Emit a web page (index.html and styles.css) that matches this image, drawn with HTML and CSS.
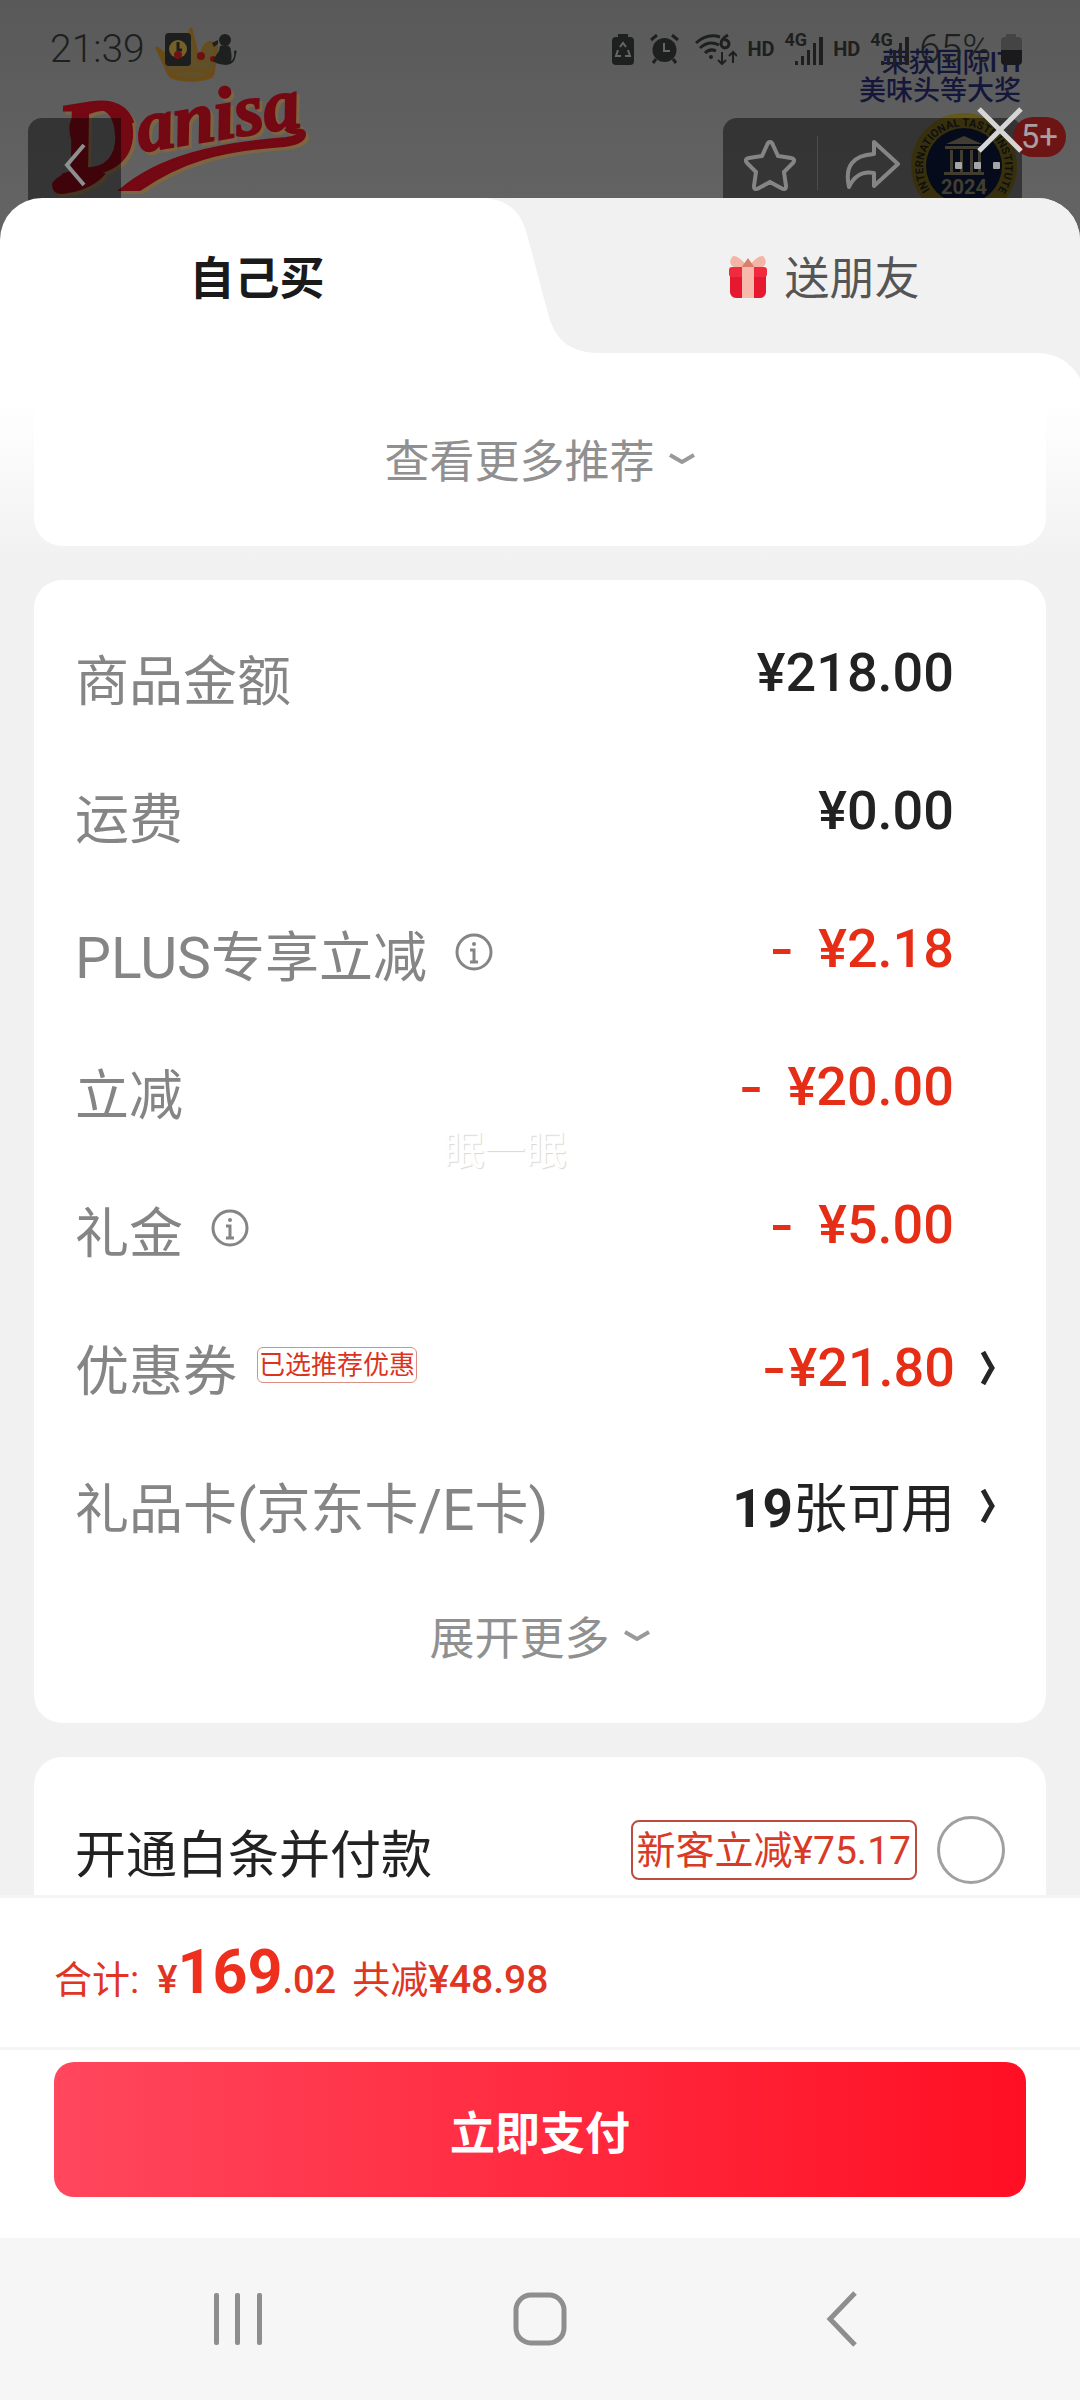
FILE: index.html
```html
<!DOCTYPE html>
<html lang="zh-CN">
<head>
<meta charset="utf-8">
<meta name="viewport" content="width=device-width, initial-scale=1">
<title>立即支付</title>
<link rel="stylesheet" href="styles.css">
</head>
<body>
<header class="backdrop">
  <svg class="art art-left" width="340" height="240" viewBox="0 0 340 240" aria-hidden="true">
    <g fill="none" stroke="#6b4c16" stroke-width="3" stroke-linejoin="round">
      <path d="M157 48l12 26q22 12 44 0l4-27q-8-10-14 2l-4 12-8-32-10 32-8-14-4 10z" fill="#5f5029"/>
      <ellipse cx="191" cy="75" rx="21" ry="5"/>
    </g>
    <circle cx="201" cy="56" r="4" fill="#6e1010"/><circle cx="213" cy="59" r="3" fill="#6e1010"/>
    <g class="brand">
      <g transform="rotate(-9 140 150)">
        <text class="brand-initial" x="60" y="166">D</text>
        <text class="brand-rest" x="140" y="152">anisa</text>
      </g>
      <path d="M120 190C160 156 215 144 286 138Q300 136 298 133Q290 134 286 130Q306 127 305 135Q304 144 284 146C220 150 180 162 140 190z"/>
      <path d="M90 170Q60 172 53 184Q53 196 68 192Q92 188 104 174z"/>
      <path d="M76 140Q66 110 104 106Q124 106 130 124" fill="none" stroke-width="9"/>
    </g>
  </svg>
  <svg class="art art-right" width="240" height="240" viewBox="840 0 240 240" aria-hidden="true">
    <text class="award" x="1021" y="72">荣获国际ITI</text>
    <text class="award" x="1021" y="100">美味头等大奖</text>
    <circle cx="964" cy="166" r="53" fill="#665816"/>
    <circle cx="964" cy="166" r="38" fill="#0c1433"/>
    <path id="ring" d="M930 190A41 41 0 1 1 998 190" fill="none"/>
    <text class="seal-ring"><textPath href="#ring">INTERNATIONAL TASTE INSTITUTE</textPath></text>
    <path d="M946 144l18-8 18 8zM945 146h38v3h-38zM950 150h3v22h-3zM960 150h3v22h-3zM970 150h3v22h-3zM978 150h3v22h-3zM944 172h40v3h-40z" fill="#77715a"/>
    <text class="seal-year" x="964" y="194">2024</text>
  </svg>

  <div class="status">
    <span class="clock">21:39</span>
    <svg class="app-icon" width="26" height="33" viewBox="0 0 26 33"><rect width="26" height="33" rx="4" fill="#1d1e1e"/><circle cx="13" cy="16" r="9" fill="#75602a"/><path d="M13 9v8h4" fill="none" stroke="#1d1e1e" stroke-width="3"/><circle cx="13" cy="22" r="4" fill="#731010"/></svg>
    <svg class="cat-icon" width="26" height="31" viewBox="0 0 26 31" fill="#1e1f1f"><circle cx="14" cy="6" r="6"/><path d="M9 12Q20 9 20 17Q21 23 20 27Q24 25 23 17Q27 15 25 20Q24 31 15 31Q3 30 2 26L8 17zM1 9l6-3v4l-4 3z"/></svg>
    <div class="signals">
      <div class="alerts">
        <svg width="22" height="31" viewBox="0 0 22 31"><path d="M6 0h10v3h2q4 0 4 4v20q0 4-4 4H4q-4 0-4-4V7q0-4 4-4h2z" fill="#1e1f1f"/><path d="M8 13l3-4 3 4M16 16l2 6h-5M9 22H4l2-6" fill="none" stroke="#666" stroke-width="2"/></svg>
        <svg width="29" height="30" viewBox="0 0 29 30"><circle cx="14.500" cy="16" r="12" fill="#1e1f1f"/><path d="M1 6l6-5M28 6l-6-5M6 25l-3 4M23 25l3 4" stroke="#1e1f1f" stroke-width="3" fill="none"/><path d="M14 9v8h6" fill="none" stroke="#666" stroke-width="2"/></svg>
        <svg width="42" height="32" viewBox="0 0 42 32" fill="none" stroke="#1e1f1f" stroke-width="3"><path d="M1 10Q12 0 25 4M5 15Q14 7 24 12M10 20q5-5 11-2"/><path d="M27 19v12M23 27l4 4 4-4M38 30V19M34 23l4-4 4 4" stroke-width="2"/><circle cx="16" cy="24" r="2" fill="#1e1f1f" stroke="none"/><path d="M33 2q-7 4-7 9a4 4 0 1 0 3-4"/></svg>
      </div>
      <span class="hd">HD</span>
      <span class="cell"><span class="gen">4G</span><svg width="28" height="28" viewBox="0 0 28 28" fill="#1e1f1f"><path d="M0 24h3v4H0zM6 19h3v9H6zM12 13h3v15h-3zM18 6h3v22h-3zM24 0h4v28h-4z"/></svg></span>
      <span class="hd">HD</span>
      <span class="cell"><span class="gen">4G</span><svg width="28" height="28" viewBox="0 0 28 28" fill="#1e1f1f"><path d="M0 24h3v4H0zM6 19h3v9H6zM12 13h3v15h-3zM18 6h3v22h-3zM24 0h4v28h-4z"/></svg></span>
      <span class="percent">65%</span>
      <svg width="21" height="31" viewBox="0 0 21 31"><path d="M5 0h10v3h2q4 0 4 4v9H0V7q0-4 4-4h1z" fill="#444"/><path d="M0 16h21v11q0 4-4 4H4q-4 0-4-4z" fill="#1a1a1c"/></svg>
    </div>
  </div>

  <div class="toolbar">
    <button class="tool back" aria-label="返回"><svg width="24" height="46" viewBox="0 0 24 46"><path d="M21 3L4 23l17 20" fill="none" stroke="#8d9090" stroke-width="4"/></svg></button>
    <div class="tool-group">
      <button class="tool" aria-label="收藏"><svg width="54" height="54" viewBox="0 0 54 54"><path d="M27 4Q29 4 30 7L35 18 48 20Q53 21 50 25L41 34 43 48Q43 53 38 50L27 44 16 50Q11 53 11 48L13 34 4 25Q1 21 6 20L19 18 24 7Q25 4 27 4z" fill="none" stroke="#858585" stroke-width="4"/></svg></button>
      <span class="divider"></span>
      <button class="tool share" aria-label="分享"><svg width="56" height="52" viewBox="0 0 56 52"><path d="M30 4L54 26 30 48V35Q13 32 5 49Q-2 18 30 16z" fill="none" stroke="#858585" stroke-width="4" stroke-linejoin="round"/></svg></button>
      <button class="tool dots" aria-label="更多"><svg width="46" height="8" viewBox="0 0 46 8" fill="#a5a5a5"><rect width="7" height="7" rx="1"/><rect x="19" width="7" height="7" rx="1"/><rect x="38" width="7" height="7" rx="1"/></svg></button>
    </div>
  </div>
  <span class="count">5+</span>
  <button class="close" aria-label="关闭"><svg width="46" height="46" viewBox="0 0 46 46"><path d="M2 2l42 42M44 2L2 44" stroke="#d6d6d6" stroke-width="5"/></svg></button>
</header>

<main class="sheet">
  <div class="tabs">
    <svg class="tab-shape" viewBox="0 0 1080 180" preserveAspectRatio="none" aria-hidden="true"><path d="M480 0C508 0 522 14 528 40L547 112C553 138 566 155 600 155H1038Q1066 156 1080 180V0z" fill="#f1f1f1"/></svg>
    <button class="tab tab-self">自己买</button>
    <button class="tab tab-gift"><svg class="gift" width="40" height="46" viewBox="0 0 40 46"><path d="M20 14Q8 0 4 4Q-1 12 8 15zM20 14Q32 0 36 4Q41 12 32 15z" fill="#f3b5a6"/><path d="M13 15l7-10 7 10z" fill="#d9806d"/><rect x="2" y="15" width="36" height="30" rx="6" fill="#e6182f"/><rect x="1" y="14" width="38" height="10" rx="3" fill="#f22a3e"/><path d="M14 14h12v31H14z" fill="#f6b9ab"/></svg>送朋友</button>
  </div>

  <div class="content">
    <section class="card card-more">
      <button class="more">查看更多推荐<svg width="28" height="16" viewBox="0 0 28 16"><path d="M2 4l12 7 12-7" fill="none" stroke="#999" stroke-width="4"/></svg></button>
    </section>

    <section class="card card-bill">
      <dl class="bill">
        <div class="row"><dt>商品金额</dt><dd class="raised">¥218.00</dd></div>
        <div class="row"><dt>运费</dt><dd class="raised">¥0.00</dd></div>
        <div class="row"><dt><span class="latin">PLUS</span>专享立减<button class="info" aria-label="说明"><svg width="38" height="38" viewBox="0 0 38 38"><circle cx="19" cy="19" r="17" fill="none" stroke="#858585" stroke-width="3"/><circle cx="19" cy="11" r="2" fill="#858585"/><path d="M15 17h4v12M15 29h8" fill="none" stroke="#858585" stroke-width="3"/></svg></button></dt><dd class="raised off"><span class="minus">-</span>¥2.18</dd></div>
        <div class="row"><dt>立减</dt><dd class="raised off"><span class="minus">-</span>¥20.00</dd></div>
        <div class="row"><dt>礼金<button class="info" aria-label="说明"><svg width="38" height="38" viewBox="0 0 38 38"><circle cx="19" cy="19" r="17" fill="none" stroke="#858585" stroke-width="3"/><circle cx="19" cy="11" r="2" fill="#858585"/><path d="M15 17h4v12M15 29h8" fill="none" stroke="#858585" stroke-width="3"/></svg></button></dt><dd class="raised off"><span class="minus">-</span>¥5.00</dd></div>
        <div class="row"><dt>优惠券<span class="picked">已选推荐优惠</span></dt><dd class="off linked"><span class="minus tight">-</span>¥21.80<svg class="go" width="16" height="34" viewBox="0 0 16 34"><path d="M3 1Q9 12 12 17Q9 22 3 33" fill="none" stroke="#262626" stroke-width="5"/></svg></dd></div>
        <div class="row"><dt>礼品卡<span class="latin">(</span>京东卡<span class="latin">/E</span>卡<span class="latin">)</span></dt><dd class="linked"><b>19</b><span class="unit">张可用</span><svg class="go" width="16" height="34" viewBox="0 0 16 34"><path d="M3 1Q9 12 12 17Q9 22 3 33" fill="none" stroke="#262626" stroke-width="5"/></svg></dd></div>
      </dl>
      <button class="more">展开更多<svg width="28" height="16" viewBox="0 0 28 16"><path d="M2 4l12 7 12-7" fill="none" stroke="#999" stroke-width="4"/></svg></button>
      <span class="watermark">眠一眠</span>
    </section>

    <section class="card card-pay">
      <label class="pay-name" for="baitiao">开通白条并付款</label>
      <span class="promo">新客立减¥75.17</span>
      <input class="radio" type="radio" id="baitiao" name="pay">
    </section>
  </div>

  <footer class="checkout">
    <p class="total">合计:<span class="sum">¥<b>169</b>.02</span><span>共减<span class="saved">¥48.98</span></span></p>
    <div class="action"><button class="pay">立即支付</button></div>
  </footer>
</main>

<nav class="system">
  <button aria-label="最近"><svg width="48" height="54" viewBox="0 0 48 54" fill="#8e8e8e"><rect y="1" width="5" height="52" rx="2"/><rect x="21" y="1" width="5" height="52" rx="2"/><rect x="43" y="1" width="5" height="52" rx="2"/></svg></button>
  <button aria-label="主页"><svg width="54" height="54" viewBox="0 0 54 54"><rect x="3" y="3" width="48" height="48" rx="15" fill="none" stroke="#8e8e8e" stroke-width="5"/></svg></button>
  <button aria-label="返回"><svg width="32" height="56" viewBox="0 0 32 56"><path d="M29 2L4 28l25 26" fill="none" stroke="#8e8e8e" stroke-width="5"/></svg></button>
</nav>
</body>
</html>
```

FILE: styles.css
```css
* { box-sizing: border-box; }
body {
  margin: 0;
  height: 100vh;
  display: flex;
  flex-direction: column;
  background: #fff;
  color: #222;
  font-family: Roboto, "Noto Sans CJK SC", sans-serif;
}
button {
  margin: 0;
  padding: 0;
  border: 0;
  background: none;
  color: inherit;
  font: inherit;
}
svg { display: block; flex: none; }

/* Dimmed product page behind the sheet */
.backdrop {
  position: relative;
  flex: none;
  height: 240px;
  overflow: hidden;
  background: linear-gradient(#595959, #636363 200px);
}
.art { position: absolute; top: 0; }
.art-left { left: 0; }
.art-right { right: 0; }
.brand {
  font-family: "Liberation Serif", serif;
  font-style: italic;
  font-weight: 700;
  fill: #740813;
  stroke: #740813;
  stroke-width: 2px;
  filter: drop-shadow(3px 3px 0 #7d6541);
}
.brand-initial { font-size: 108px; }
.brand-rest { font-size: 74px; }
.award { font-size: 27px; font-weight: 500; text-anchor: end; fill: #14173a; }
.seal-ring { font-size: 11px; font-weight: 700; fill: #1c1c1c; }
.seal-year { font-size: 20px; font-weight: 700; text-anchor: middle; fill: #77715a; }

.status {
  position: relative;
  display: flex;
  align-items: center;
  height: 98px;
  padding: 0 58px 0 50px;
  color: #1e1f1f;
}
.clock, .percent { font-size: 39px; font-weight: 300; }
.app-icon { margin-left: 20px; }
.cat-icon { margin-left: 20px; }
.signals {
  display: flex;
  align-items: center;
  gap: 10px;
  margin-left: auto;
}
.alerts { display: flex; align-items: center; gap: 16px; }
.hd { font-size: 20px; font-weight: 700; }
.cell { display: flex; align-items: flex-end; height: 32px; }
.gen { align-self: flex-start; margin-right: -12px; font-size: 18px; line-height: 14px; font-weight: 700; }

.toolbar {
  position: relative;
  display: flex;
  justify-content: space-between;
  padding: 20px 58px 0 28px;
}
.tool { display: flex; justify-content: center; width: 94px; height: 94px; padding-top: 20px; }
.back { width: 93px; height: 122px; padding-top: 24px; background: rgba(0, 0, 0, .45); border-radius: 14px 0 0 0; }
.tool-group { display: flex; width: 299px; height: 122px; background: rgba(0, 0, 0, .45); border-radius: 14px 14px 0 0; }
.divider { width: 1px; height: 54px; margin-top: 18px; background: #4c4c4c; }
.share { width: 108px; }
.dots { padding-top: 44px; padding-left: 10px; }
.count {
  position: absolute;
  top: 117px;
  right: 14px;
  padding: 0 8px;
  border-radius: 20px;
  background: #6d1515;
  color: #a8a0a0;
  font-size: 33px;
  line-height: 40px;
}
.close { position: absolute; top: 107px; right: 57px; }

/* Purchase sheet */
.sheet {
  position: relative;
  flex: 1;
  min-height: 0;
  display: flex;
  flex-direction: column;
  margin-top: -42px;
  background: #fff;
  border-radius: 42px 42px 0 0;
  overflow: hidden;
}
.tabs { position: relative; flex: none; display: flex; height: 155px; z-index: 1; }
.tab-shape { position: absolute; top: 0; left: 0; width: 100%; height: 180px; }
.tab {
  position: relative;
  display: flex;
  align-items: center;
  justify-content: center;
  gap: 16px;
  padding-top: 8px;
  font-size: 45px;
  line-height: 60px;
}
.tab-self { flex: 514; font-weight: 700; color: #1a1a1a; }
.tab-gift { flex: 512; padding-left: 54px; color: #555; }
.gift { margin-bottom: 8px; }

.content {
  flex: 1;
  min-height: 0;
  overflow: hidden;
  padding: 0 34px;
  background: linear-gradient(#fff 50px, #f1f1f1 210px);
}
.card { position: relative; border-radius: 28px; background: #fff; margin-bottom: 34px; }
.card-more { height: 193px; padding-top: 80px; }
.more {
  display: flex;
  align-items: center;
  justify-content: center;
  gap: 13px;
  width: 100%;
  color: #909090;
  font-size: 45px;
  line-height: 60px;
}
.more svg { margin-bottom: 8px; }
.card-bill { padding: 32px 0 53px; }
.bill { margin: 0; padding: 0 50px 0 41px; }
.row { display: flex; justify-content: space-between; align-items: center; height: 138px; }
dt { display: flex; align-items: center; padding-top: 4px; color: #858585; font-size: 54px; line-height: 72px; }
.latin { font-size: 57px; }
.info { margin: 0 0 14px 28px; }
.picked {
  margin: 0 0 16px 20px;
  padding: 0 1px;
  border: 1px solid #dc8d84;
  border-radius: 6px;
  color: #dc3320;
  font-size: 26px;
  line-height: 34px;
}
dd { display: flex; align-items: center; margin: 0 42px 0 0; font-size: 54px; line-height: 72px; font-weight: 500; }
.raised { padding-bottom: 16px; }
.off { color: #e62e16; }
.minus { margin-right: 24px; font-family: Inter, sans-serif; }
.tight { margin-right: 2px; }
.linked { margin-right: 0; padding-bottom: 6px; }
.linked b { padding-top: 6px; font-size: 53px; }
.unit { padding-top: 8px; font-weight: 400; }
.go { margin-left: 25px; }
.card-bill .more { padding-top: 32px; }
.watermark {
  position: absolute;
  top: 541px;
  left: 0;
  right: 70px;
  text-align: center;
  color: #fff;
  font-size: 41px;
  line-height: 60px;
  text-shadow: 1px 1px 1px #d8d8d8;
}
.card-pay { display: flex; align-items: center; padding: 52px 41px 60px 41px; }
.pay-name { flex: 1; padding-top: 12px; font-size: 51px; line-height: 70px; }
.promo {
  margin-right: 20px;
  padding: 2px 4px 0;
  border: 2px solid #bd4c40;
  border-radius: 8px;
  color: #d93a26;
  font-size: 39px;
  line-height: 54px;
}
.radio {
  appearance: none;
  width: 68px;
  height: 68px;
  margin: 0;
  border: 3px solid #a0a0a0;
  border-radius: 50%;
}

.checkout { position: relative; flex: none; background: #fff; border-top: 3px solid #f5f5f5; }
.total {
  display: flex;
  align-items: baseline;
  height: 149px;
  margin: 0;
  padding: 32px 54px 0;
  color: #e03522;
  font-size: 38px;
  line-height: 84px;
}
.sum { margin: 0 16px 0 18px; font-size: 38px; font-weight: 500; }
.sum b { font-size: 61px; color: #ee2f1e; }
.saved { font-size: 39px; font-weight: 500; }
.action { padding: 12px 54px 41px; border-top: 3px solid #f5f5f5; }
.pay {
  width: 100%;
  height: 135px;
  padding-top: 2px;
  border-radius: 20px;
  background: linear-gradient(90deg, #ff475d, #ff0f23);
  color: #fff;
  font-size: 45px;
  font-weight: 700;
}

.system {
  flex: none;
  display: grid;
  grid-template-columns: repeat(3, 1fr);
  justify-items: center;
  align-items: center;
  height: 162px;
  padding: 0 8%;
  background: #f6f6f6;
}
```
